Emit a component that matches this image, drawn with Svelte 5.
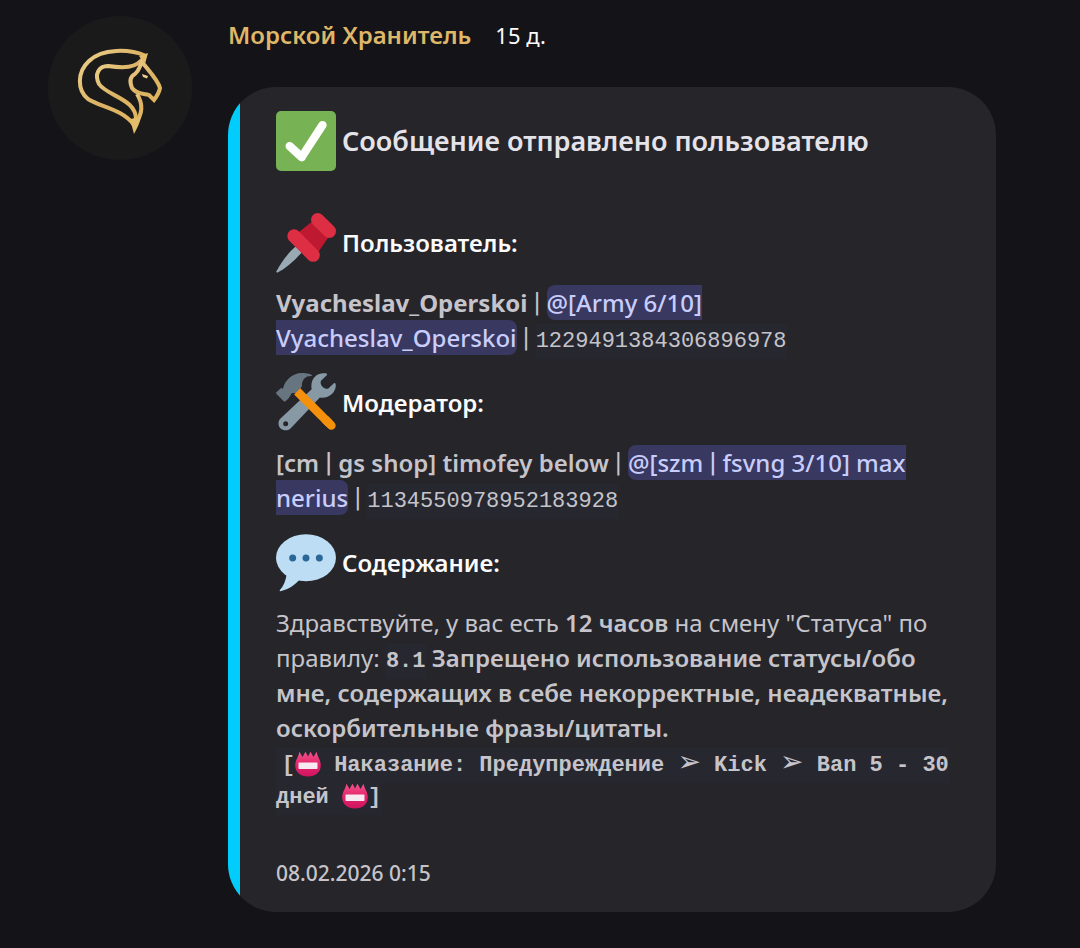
<script lang="ts">
	const author = 'Морской Хранитель';
	const age = '15 д.';
	const sentAt = '08.02.2026 0:15';
</script>

{#snippet nameBadge()}
	<svg class="badge" viewBox="0 0 26 26" role="img" aria-label="📛">
		<defs>
			<linearGradient id="tulip" x1="0" y1="0" x2="0" y2="1">
				<stop offset="0" stop-color="#f2558c" />
				<stop offset="0.5" stop-color="#e5246b" />
				<stop offset="1" stop-color="#cf1560" />
			</linearGradient>
		</defs>
		<path
			fill="url(#tulip)"
			d="M4.500.8 7.500 6 10.500.8 13 5.500 15.500.8 18.500 6 21.500.8C22.500 6 25.800 9 25.800 14.500 25.800 21 20.500 25.500 13 25.500S.2 21 .2 14.500C.2 9 3.500 6 4.500.8z"
		/>
		<rect x="3.500" y="11.500" width="19" height="6.500" rx=".8" fill="#f6eaf0" />
	</svg>
{/snippet}

<main class="message">
	<svg class="avatar" viewBox="8 8 144 144" role="img" aria-label={author}>
		<defs>
			<linearGradient id="gold" x1="0" y1="0" x2="1" y2="1">
				<stop offset="0" stop-color="#ecd08c" />
				<stop offset="0.5" stop-color="#dcb365" />
				<stop offset="1" stop-color="#e0b65e" />
			</linearGradient>
		</defs>
		<circle cx="80" cy="80" r="72" fill="#1b1a1a" />
		<g fill="none" stroke="url(#gold)" stroke-width="4">
			<path d="M105 47.500C90 41 62 40 49 53 37 64 37 82 48 91 60 99 83 101 94 117" />
			<path d="M96 112C97 91 67 88 59 76 54 66 59 58 68 58 82 60 97 61 104 49" />
			<path
				d="M102 54C99 60 99 63 95 66 89 69 90 75 92 80 97 87 104 85 109 87L114 92C117 88 119 85 120 80 118 72 109 63 102 54z"
			/>
			<path d="M97 86C104 97 102 107 95 116" />
		</g>
		<path d="M99 48l9-3-3 11zM90 111l11-2c-1 6-4 11-7 17z" fill="#e3bd6c" />
		<path d="M102 66l6 2-1 2.500-4-1.500z" fill="#ecd08c" />
	</svg>

	<div class="body">
		<header>
			<span class="author">{author}</span>
			<time class="age">{age}</time>
		</header>

		<article class="embed">
			<div class="accent"></div>
			<div class="content">
				<h1>
					<svg class="emoji" viewBox="0 0 36 36" aria-hidden="true">
						<rect width="36" height="36" rx="3" fill="#77b255" />
						<path
							fill="#fff"
							d="M29.280 6.362c-1.156-.751-2.704-.422-3.458.736L14.936 23.877l-5.029-4.650c-1.014-.938-2.596-.875-3.533.138-.937 1.014-.875 2.596.139 3.533l7.209 6.666c.480.445 1.090.665 1.696.665.673 0 1.534-.282 2.099-1.139.332-.506 12.500-19.270 12.500-19.270.751-1.159.421-2.707-.737-3.458z"
						/>
					</svg>
					<span>Сообщение отправлено пользователю</span>
				</h1>

				<section>
					<h2>
						<svg class="emoji" viewBox="0 0 36 36" aria-hidden="true">
							<path fill="#99aab5" d="M.1 35.300C3 30 7 24 12 20l3.500 3.500C11 29 6 33 .7 35.900z" />
							<path fill="#be1931" d="M13 12 23 4l9.500 9L25 24z" />
							<g stroke="#dd2e44" stroke-width="8" stroke-linecap="round">
								<path d="M25 4l7 7" />
								<path d="M10.800 13.800l11.500 11.500" />
							</g>
						</svg>
						<span>Пользователь:</span>
					</h2>
					<p>
						<strong class="nick">Vyacheslav_Operskoi</strong> <span class="bar">|</span>
						<span class="mention">@[Army 6/10]<br />Vyacheslav_Operskoi</span> <span class="bar">|</span>
						<code>1229491384306896978</code>
					</p>
				</section>

				<section>
					<h2>
						<svg class="emoji" viewBox="0 0 36 36" aria-hidden="true">
							<path
								fill="#8899a6"
								fill-rule="evenodd"
								d="M29.900.2C24 -.6 20.300 4 21.400 9.800L2.700 27.300C1 29 1.200 31.800 2.800 33.300S7.500 34.800 9 33L26.300 14.700C32 15.600 36.500 11 35.800 6.800c-.2-.9-.9-.9-1.400-.4L31.600 9.200C29.800 10.500 25.800 7.400 27 4.600L30.300 1.500c.5-.5.4-1.200-.4-1.300zM5.800 28.900a1.500 1.500 0 1 1 0 3 1.500 1.500 0 0 1 0-3z"
							/>
							<path
								fill="#66757f"
								d="M.2 11.500 3 9l1.200.4C5 5 9.500 0 15.500 0 19 0 22 .8 21.500 1.800 18 1.600 15.500 3.500 15.500 8L13 12H9.500C8.500 14 7.500 15.500 5.700 17q-.7.400-1.200-.2L.3 12.600q-.5-.6-.1-1.100z"
							/>
							<path stroke="#f4900c" stroke-width="5.200" d="M12.700 11 32 30.300" />
							<path stroke="#f4900c" stroke-width="5.200" stroke-linecap="round" d="M30 28.300l3.200 3.200" />
						</svg>
						<span>Модератор:</span>
					</h2>
					<p>
						<strong>[cm <span class="bar">|</span> gs shop] timofey below</strong> <span class="bar">|</span>
						<span class="mention">@[szm <span class="bar">|</span> fsvng 3/10] max<br />nerius</span>
						<span class="bar">|</span>
						<code>1134550978952183928</code>
					</p>
				</section>

				<section>
					<h2>
						<svg class="emoji" viewBox="0 0 36 36" aria-hidden="true">
							<g fill="#bdddf4">
								<ellipse cx="18" cy="14.900" rx="18" ry="14.100" />
								<path d="M6.500 24C6 28.500 4.500 32 2.200 34.400q-.2.500.5.500C8 34 11.500 31 14.500 27.500z" />
							</g>
							<g fill="#2a6797">
								<circle cx="10" cy="15" r="2.100" />
								<circle cx="18" cy="15" r="2.100" />
								<circle cx="26" cy="15" r="2.100" />
							</g>
						</svg>
						<span>Содержание:</span>
					</h2>
					<p>
						Здравствуйте, у вас есть <strong>12 часов</strong> на смену "Статуса" по<br />
						правилу: <strong><code>8.1</code> Запрещено использование статусы/обо<br />
						мне, содержащих в себе некорректные, неадекватные,<br />
						оскорбительные фразы/цитаты.</strong>
					</p>
					<p class="penalty">
						<code><span class="indent">{' '}</span>[{@render nameBadge()} Наказание: Предупреждение <span class="arrow">➢</span> Kick <span class="arrow">➢</span> Ban 5 - 30<br />дней {@render nameBadge()}]</code>
					</p>
				</section>

				<footer>{sentAt}</footer>
			</div>
		</article>
	</div>
</main>

<style>
	:global(body) {
		margin: 0;
		background: #141318;
	}

	.message {
		display: flex;
		align-items: flex-start;
		gap: 36px;
		min-height: 100vh;
		box-sizing: border-box;
		padding: 16px 84px 36px 48px;
		font-family: 'Noto Sans', sans-serif;
		font-size: 24px;
		line-height: 35px;
		color: #c5c4ca;
	}

	.avatar {
		flex: none;
		width: 144px;
		height: 144px;
	}

	.body {
		flex: 1;
		min-width: 0;
	}

	header {
		display: flex;
		align-items: baseline;
		gap: 24px;
		padding-top: 1px;
		margin-bottom: 34px;
	}

	.author {
		font-weight: 650;
		color: #deb768;
	}

	.age {
		font-size: 22px;
		color: #fbfbfc;
	}

	.embed {
		display: flex;
		overflow: hidden;
		border-radius: 48px;
		background: #26252a;
	}

	.accent {
		flex: none;
		width: 12px;
		background: #00cdfc;
	}

	.content {
		flex: 1;
		padding: 24px 36px;
	}

	h1,
	h2 {
		display: flex;
		align-items: center;
		gap: 6px;
		margin: 0;
		font-size: 24px;
		font-weight: 650;
		color: #fbfbfc;
	}

	h1 span,
	h2 span {
		padding-bottom: 2px;
	}

	h1 {
		margin-bottom: 42px;
		font-size: 27px;
		font-weight: 600;
		color: #e4e3e9;
	}

	h2 {
		margin-bottom: 12px;
	}

	.emoji {
		flex: none;
		width: 60px;
		height: 60px;
	}

	section {
		margin-bottom: 18px;
	}

	p {
		margin: 0;
		white-space: nowrap;
	}

	strong {
		font-weight: 650;
	}

	.nick {
		font-weight: 700;
	}

	.mention {
		padding: 1px 0;
		border-radius: 8px;
		background: #383861;
		font-weight: 500;
		color: #c9cdfb;
	}

	.bar {
		font-family: Roboto, sans-serif;
		font-size: 27px;
		line-height: 1;
	}

	code {
		padding: 5px 0;
		background: #272730;
		font-family: 'Liberation Mono', monospace;
		font-size: 22px;
		line-height: 1;
	}

	.penalty {
		padding-top: 1px;
		line-height: 32px;
		font-weight: 700;
	}

	.penalty code {
		white-space: pre;
	}

	.indent {
		font-family: 'Noto Sans', sans-serif;
		line-height: 1;
	}

	.badge {
		width: 26px;
		height: 26px;
		vertical-align: -6px;
	}

	.arrow {
		font-family: 'DejaVu Sans', sans-serif;
		font-size: 28px;
		line-height: 1;
	}

	footer {
		padding-top: 30px;
		font-size: 21px;
		font-weight: 500;
		line-height: 30px;
	}
</style>
